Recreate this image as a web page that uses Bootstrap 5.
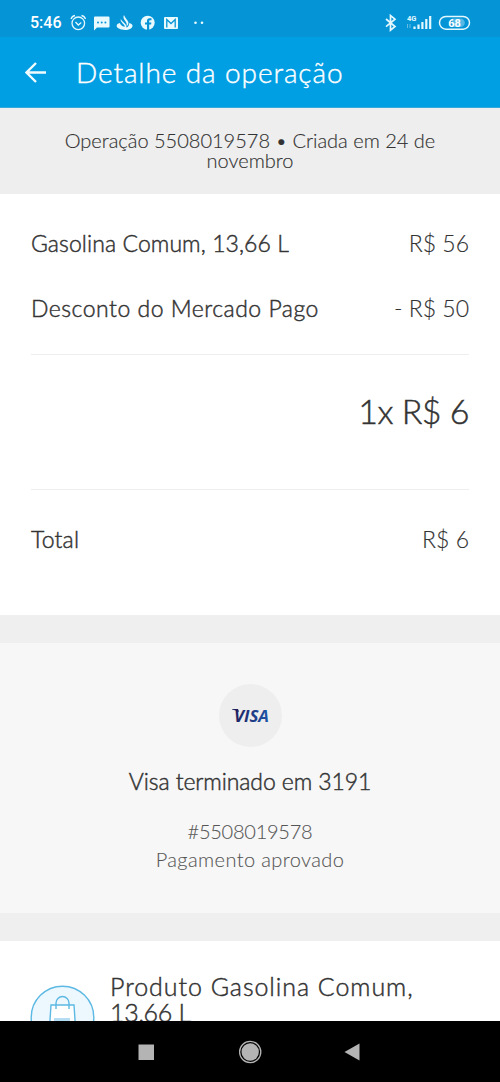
<!DOCTYPE html>
<html lang="pt-BR">
<head>
<meta charset="utf-8">
<meta name="viewport" content="width=device-width, initial-scale=1">
<title>Detalhe da operação</title>
<link href="https://cdn.jsdelivr.net/npm/bootstrap@5.3.0/dist/css/bootstrap.min.css" rel="stylesheet">
<style>
body{font-family:Lato,"Open Sans",sans-serif;color:#333;height:1082px;overflow:hidden;background:#fff}
.status{height:37px;background:#0594d6;font:500 16px/20px Roboto,sans-serif;padding:9px 29px 0 30px}
.status svg,.topbar svg,.sysnav svg{display:block;flex:none}
.clock{width:40px;padding-top:4px}
.topbar{height:71px;background:#009ee3;padding:0 25px;border-bottom:1px solid #38a9dc}
.topbar h1{font-size:28px;line-height:36px;font-weight:300;letter-spacing:.9px;margin:0 0 1px 29px;-webkit-text-stroke:.4px #fff}
.summary{height:86px;background:#eee;padding:22px 60px 0;font-size:20px;line-height:20px;font-weight:300;color:#333;-webkit-text-stroke:.15px #333}
.detail{height:421px;padding:0 31px}
.line-item{font-size:23px;line-height:30px;padding-top:34px;margin-bottom:1px}
.regular{font-weight:300;-webkit-text-stroke:.45px #333}
.amount{font-weight:300;-webkit-text-stroke:.15px #333}
.rule{border-top:1px solid #eee}
.installment{font-size:34px;line-height:40px;padding-top:36px}
.band{height:28px;background:#efefef}
.payment{height:270px;background:#f7f7f7;padding-top:41px}
.brand{width:63px;height:63px;background:#eee}
.payment h2{font-size:23px;line-height:30px;letter-spacing:-.1px;margin:19px 0 0}
.payment p{font-size:20px;line-height:28px;font-weight:300;color:#555;margin:21px 0 0;-webkit-text-stroke:.1px #555}
.product{height:80px;padding:32px 30px 0;overflow:hidden}
.product h3{font-size:25px;line-height:26px;margin:0 0 0 15px;letter-spacing:.95px}
.sysnav{height:61px}
</style>
</head>
<body class="d-flex flex-column">
<header class="text-white">
  <div class="status d-flex justify-content-between">
    <div class="d-flex">
      <span class="clock">5:46</span>
      <svg width="146" height="22" viewBox="70 9 146 22" fill="none" stroke="#e4f8ff" stroke-width="1.3">
        <circle cx="78.3" cy="23.3" r="6.3"/><path d="M75.500 22l2.800 3 3-2.500M71 19q1-3 4-3.500M81.500 15.500q3 .5 4 3.500"/>
        <g fill="#e9faff" stroke="none">
          <path d="M94 17.500q0-1 1-1h13.500q1 0 1 1v9q0 1-1 1H97l-3 3z"/>
          <path d="M124 15c-1.500 3 .5 4.500 1.800 6.800 1 1.700 1.200 3 .7 4.700l1.700-2c1-3-1-4-2.200-6-.7-1.200-1.500-2-2-3.500z"/>
          <path d="M120.800 19c-.8 3 2.500 4 4.300 7.500-1.500.5-3.800-.5-5.300-3.500-4 1-4 4-.8 5.600 3.500 1.900 8.500 1.900 11.500.1 3.300-2 2.500-4.700-1.200-5.700-.2 2.600-1.200 4-2.800 4.500-.2-4.500-3.900-5-5.700-8.500z"/>
          <circle cx="147.700" cy="22.800" r="7"/>
          <rect x="164" y="17" width="14" height="12" rx="1"/>
          <circle cx="195.500" cy="22.800" r="1.300"/><circle cx="202" cy="22.800" r="1.300"/>
        </g>
        <g fill="#0594d6" stroke="none"><circle cx="98" cy="22.500" r="1"/><circle cx="101.700" cy="22.500" r="1"/><circle cx="105.400" cy="22.500" r="1"/>
        <path d="M147 30v-5.500h-2v-2h2v-1.700q0-2.500 2.500-2.500h2v2h-1.500q-.8 0-.8.8v1.400h2.200l-.3 2h-1.900v5.500z"/></g>
        <path d="M166.800 27.500v-8l4.200 4 4.200-4v8" stroke="#0594d6" stroke-width="1.300"/>
      </svg>
    </div>
    <svg width="88" height="24" viewBox="383 9 88 24" fill="none" stroke="#e4f8ff">
      <path d="M386 19l9 7.500-4.500 3.700V15.500l4.500 3.700-9 7.500" stroke-width="1.700"/>
      <text x="407" y="20.500" fill="#e4f8ff" stroke="none" font-size="7.500" font-weight="700" font-family="Roboto">4G</text>
      <path d="M407.500 28v-4M410 28v-4" stroke="#66bce5"/>
      <path d="M414.500 29v-2.500M418.500 29v-4.500M422.400 29v-7M426.300 29v-10M430.200 29v-13" stroke-width="2.200"/>
      <rect x="439.500" y="16.400" width="30" height="12.800" rx="6.400" stroke-width="1.500"/>
      <path d="M452 18.500h8.500a4.300 4.300 0 010 8.600H452z" fill="#55b8e5" stroke="none"/>
      <text x="454.500" y="26.800" fill="#fff" stroke="none" font-size="11" font-weight="700" text-anchor="middle" font-family="Roboto">68</text>
    </svg>
  </div>
  <div class="topbar d-flex align-items-center">
    <svg width="22" height="22" viewBox="25 61 22 22" fill="none" stroke="#effbff" stroke-width="2.400"><path d="M46 72.500H27.500M36 63l-9.500 9.500L36 82"/></svg>
    <h1>Detalhe da operação</h1>
  </div>
</header>
<main class="flex-shrink-0">
  <section class="summary text-center">Operação 5508019578 • Criada em 24 de novembro</section>
  <section class="detail">
    <div class="line-item d-flex justify-content-between"><span class="regular" style="letter-spacing:.08px">Gasolina Comum, 13,66 L</span><span class="amount">R$ 56</span></div>
    <div class="line-item d-flex justify-content-between"><span class="regular" style="letter-spacing:.5px">Desconto do Mercado Pago</span><span class="amount">- R$ 50</span></div>
    <div class="rule" style="margin-top:31px"></div>
    <div class="installment text-end" style="letter-spacing:-.5px"><span class="regular">1x R$ 6</span></div>
    <div class="rule" style="margin-top:58px"></div>
    <div class="line-item d-flex justify-content-between"><span class="regular" style="letter-spacing:.2px">Total</span><span class="amount">R$ 6</span></div>
  </section>
  <div class="band"></div>
  <section class="payment text-center">
    <div class="brand rounded-circle mx-auto">
      <svg width="63" height="63" viewBox="0 0 63 63"><defs><linearGradient id="blue"><stop stop-color="#20205f"/><stop offset="1" stop-color="#1f55a8"/></linearGradient></defs>
      <text x="15" y="37.500" font-family="Open Sans" font-size="16.500" font-weight="700" font-style="italic" fill="url(#blue)" textLength="35" lengthAdjust="spacingAndGlyphs">VISA</text><path d="M13 25h6l1 3q-3-2-7-2.500z" fill="#20205f"/></svg>
    </div>
    <h2 class="regular">Visa terminado em 3191</h2>
    <p><span style="letter-spacing:-.25px">#5508019578</span><br><span style="letter-spacing:.4px">Pagamento aprovado</span></p>
  </section>
  <div class="band"></div>
  <section class="product d-flex">
    <svg class="flex-shrink-0" width="65" height="65" viewBox="0 0 65 65" style="margin-top:12px" fill="none" stroke="#5cb9e3" stroke-width="1.400">
      <circle cx="32.500" cy="32.500" r="31.300" fill="#edf7fe"/>
      <path d="M21 20h23l2 30H19z" fill="#fff"/><path d="M26 24v-6a6.500 6.500 0 0113 0v6"/><path d="M24 34.500h16" stroke="#b4dcf3" stroke-width="3"/>
    </svg>
    <h3 class="regular">Produto Gasolina Comum,<br><span style="letter-spacing:-.3px">13,66 L</span></h3>
  </section>
</main>
<nav class="sysnav bg-black flex-shrink-0">
  <svg width="500" height="61" fill="#b4b4b4"><rect x="138.500" y="23.500" width="15.500" height="15.500"/><circle cx="250.200" cy="31" r="8.700"/><circle cx="250.200" cy="31" r="10.600" fill="none" stroke="#b4b4b4" stroke-width="1.300"/><path d="M344.500 31l15-8.500v17z"/></svg>
</nav>
<script src="https://cdn.jsdelivr.net/npm/bootstrap@5.3.0/dist/js/bootstrap.bundle.min.js"></script>
</body>
</html>
